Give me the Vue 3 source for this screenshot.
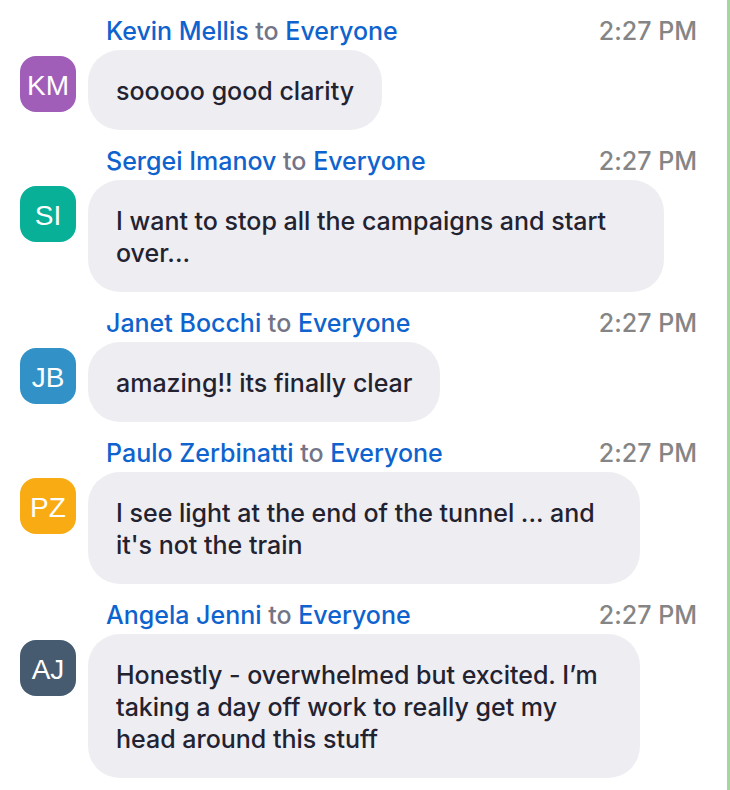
<script setup>
const messages = [
  { id: 1, name: 'Kevin Mellis', initials: 'KM', tone: 'purple', text: 'sooooo good clarity' },
  { id: 2, name: 'Sergei Imanov', initials: 'SI', tone: 'teal', long: true, text: 'I want to stop all the campaigns and start over...' },
  { id: 3, name: 'Janet Bocchi', initials: 'JB', tone: 'blue', text: 'amazing!! its finally clear' },
  { id: 4, name: 'Paulo Zerbinatti', initials: 'PZ', tone: 'amber', long: true, text: 'I see light at the end of the tunnel ... and\nit\'s not the train' },
  { id: 5, name: 'Angela Jenni', initials: 'AJ', tone: 'slate', long: true, text: 'Honestly - overwhelmed but excited. I’m\ntaking a day off work to really get my\nhead around this stuff' },
]
</script>

<template>
  <main class="chat">
    <article v-for="m in messages" :key="m.id" class="message">
      <header class="meta">
        <p class="route"><a href="#">{{ m.name }}</a> to <a href="#">Everyone</a></p>
        <time class="time" datetime="14:27">2:27 PM</time>
      </header>
      <div class="row">
        <span class="avatar" :class="m.tone">{{ m.initials }}</span>
        <p class="bubble" :class="{ long: m.long }">{{ m.text }}</p>
      </div>
    </article>
  </main>
</template>

<style>
body {
  margin: 0;
  background: #fff;
}
</style>

<style scoped>
.chat {
  box-sizing: border-box;
  min-height: 100vh;
  padding: 12px 30px 12px 20px;
  border-right: 3px solid #a5d69f;
  display: flex;
  flex-direction: column;
  gap: 12px;
  font-family: Inter, "Liberation Sans", sans-serif;
  font-size: 25px;
  font-weight: 500;
  font-variant-ligatures: none;
}
.meta {
  display: flex;
  justify-content: space-between;
  padding-left: 86px;
  line-height: 38px;
  color: #747487;
}
.route {
  margin: 0;
}
.route a {
  color: #0e63ce;
  text-decoration: none;
}
.time {
  color: #858585;
}
.row {
  display: flex;
  align-items: flex-start;
  gap: 12px;
}
.avatar {
  flex: none;
  width: 56px;
  height: 56px;
  margin-top: 6px;
  border-radius: 16px;
  color: #fff;
  font-family: "Liberation Sans", Arial, sans-serif;
  font-size: 28px;
  line-height: 60px;
  text-align: center;
}
.bubble {
  box-sizing: border-box;
  margin: 0;
  max-width: 576px;
  padding: 25px 28px 23px;
  border-radius: 32px;
  background: #eeedf2;
  color: #222230;
  line-height: 32px;
  white-space: pre-line;
}
.bubble.long {
  min-width: min(552px, 85%);
}
.purple { background: #a05eb9; }
.teal { background: #07b097; }
.blue { background: #3292c7; }
.amber { background: #f8ab12; }
.slate { background: #465a70; }
</style>
